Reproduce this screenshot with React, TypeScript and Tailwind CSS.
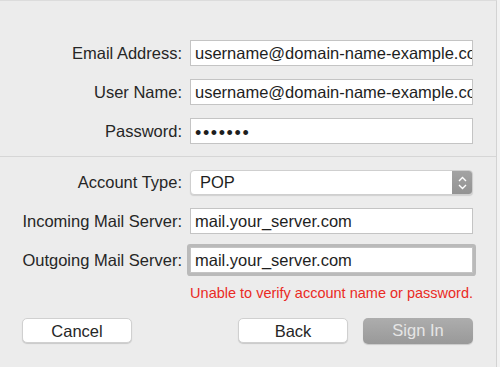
export default function App() {
  const font = { fontFamily: '"Liberation Sans", Arial, sans-serif' }
  const labelCls = "w-[182px] text-right text-[16.5px] text-[#262626] shrink-0"
  const inputCls =
    "ml-2 w-[283px] h-[26px] bg-white border border-[#c4c4c4] px-1 text-[16.5px] text-[#1e1e1e] overflow-hidden whitespace-nowrap leading-[24px]"

  return (
    <div className="w-[500px] h-[367px] bg-[#f2f2f2] flex" style={font}>
      <div className="w-[497px] h-full bg-[#ececec] border-r border-[#d3d3d3] border-t border-t-[#dcdcdc] flex flex-col">
        {/* Account fields */}
        <div className="pt-[39px] flex flex-col gap-[13px]">
          <div className="flex items-center">
            <span className={labelCls}>Email Address:</span>
            <div className={inputCls}>username@domain-name-example.com</div>
          </div>
          <div className="flex items-center">
            <span className={labelCls}>User Name:</span>
            <div className={inputCls}>username@domain-name-example.com</div>
          </div>
          <div className="flex items-center">
            <span className={labelCls}>Password:</span>
            <div className={inputCls + " tracking-[1.6px] text-[18px] pt-[2px]"}>•••••••</div>
          </div>
        </div>

        <div className="mt-[12px] h-px w-full bg-[#d6d6d6]" />

        {/* Server fields */}
        <div className="pt-[13px] flex flex-col gap-[13px]">
          <div className="flex items-center">
            <span className={labelCls}>Account Type:</span>
            <div className="ml-2 w-[283px] h-[25px] bg-white rounded-[4px] border border-[#cfcfcf] shadow-[0_1px_1px_rgba(0,0,0,0.12)] flex items-center overflow-hidden">
              <span className="flex-1 pl-[9px] text-[16.5px] text-[#1e1e1e]">POP</span>
              <div className="w-[20px] h-full bg-gradient-to-b from-[#a3a3a3] to-[#939393] flex flex-col items-center justify-center gap-[2px]">
                <svg width="9" height="6" viewBox="0 0 9 6" fill="none">
                  <path d="M1 5L4.5 1.5L8 5" stroke="white" strokeWidth="1.4" />
                </svg>
                <svg width="9" height="6" viewBox="0 0 9 6" fill="none">
                  <path d="M1 1L4.5 4.5L8 1" stroke="white" strokeWidth="1.4" />
                </svg>
              </div>
            </div>
          </div>
          <div className="flex items-center">
            <span className={labelCls}>Incoming Mail Server:</span>
            <div className={inputCls}>mail.your_server.com</div>
          </div>
          <div className="flex items-center">
            <span className={labelCls}>Outgoing Mail Server:</span>
            <div className={inputCls + " shadow-[0_0_0_3px_#bababa] rounded-[1px]"}>mail.your_server.com</div>
          </div>
        </div>

        <div className="mt-[10px] w-[473px] text-right text-[14.5px] text-[#ea2a24]">
          Unable to verify account name or password.
        </div>

        {/* Buttons */}
        <div className="mt-[13px] flex items-center">
          <button className="ml-[22px] w-[110px] h-[25px] bg-white rounded-[5px] border border-[#d0d0d0] shadow-[0_1px_1px_rgba(0,0,0,0.15)] text-[16.5px] text-[#262626]">
            Cancel
          </button>
          <button className="ml-[106px] w-[110px] h-[25px] bg-white rounded-[5px] border border-[#d0d0d0] shadow-[0_1px_1px_rgba(0,0,0,0.15)] text-[16.5px] text-[#262626]">
            Back
          </button>
          <button className="ml-[15px] w-[110px] h-[26px] bg-gradient-to-b from-[#adadad] to-[#999999] rounded-[5px] shadow-[0_1px_1px_rgba(0,0,0,0.15)] text-[16.5px] text-[#e6e6e6]">
            Sign In
          </button>
        </div>
      </div>
    </div>
  )
}
